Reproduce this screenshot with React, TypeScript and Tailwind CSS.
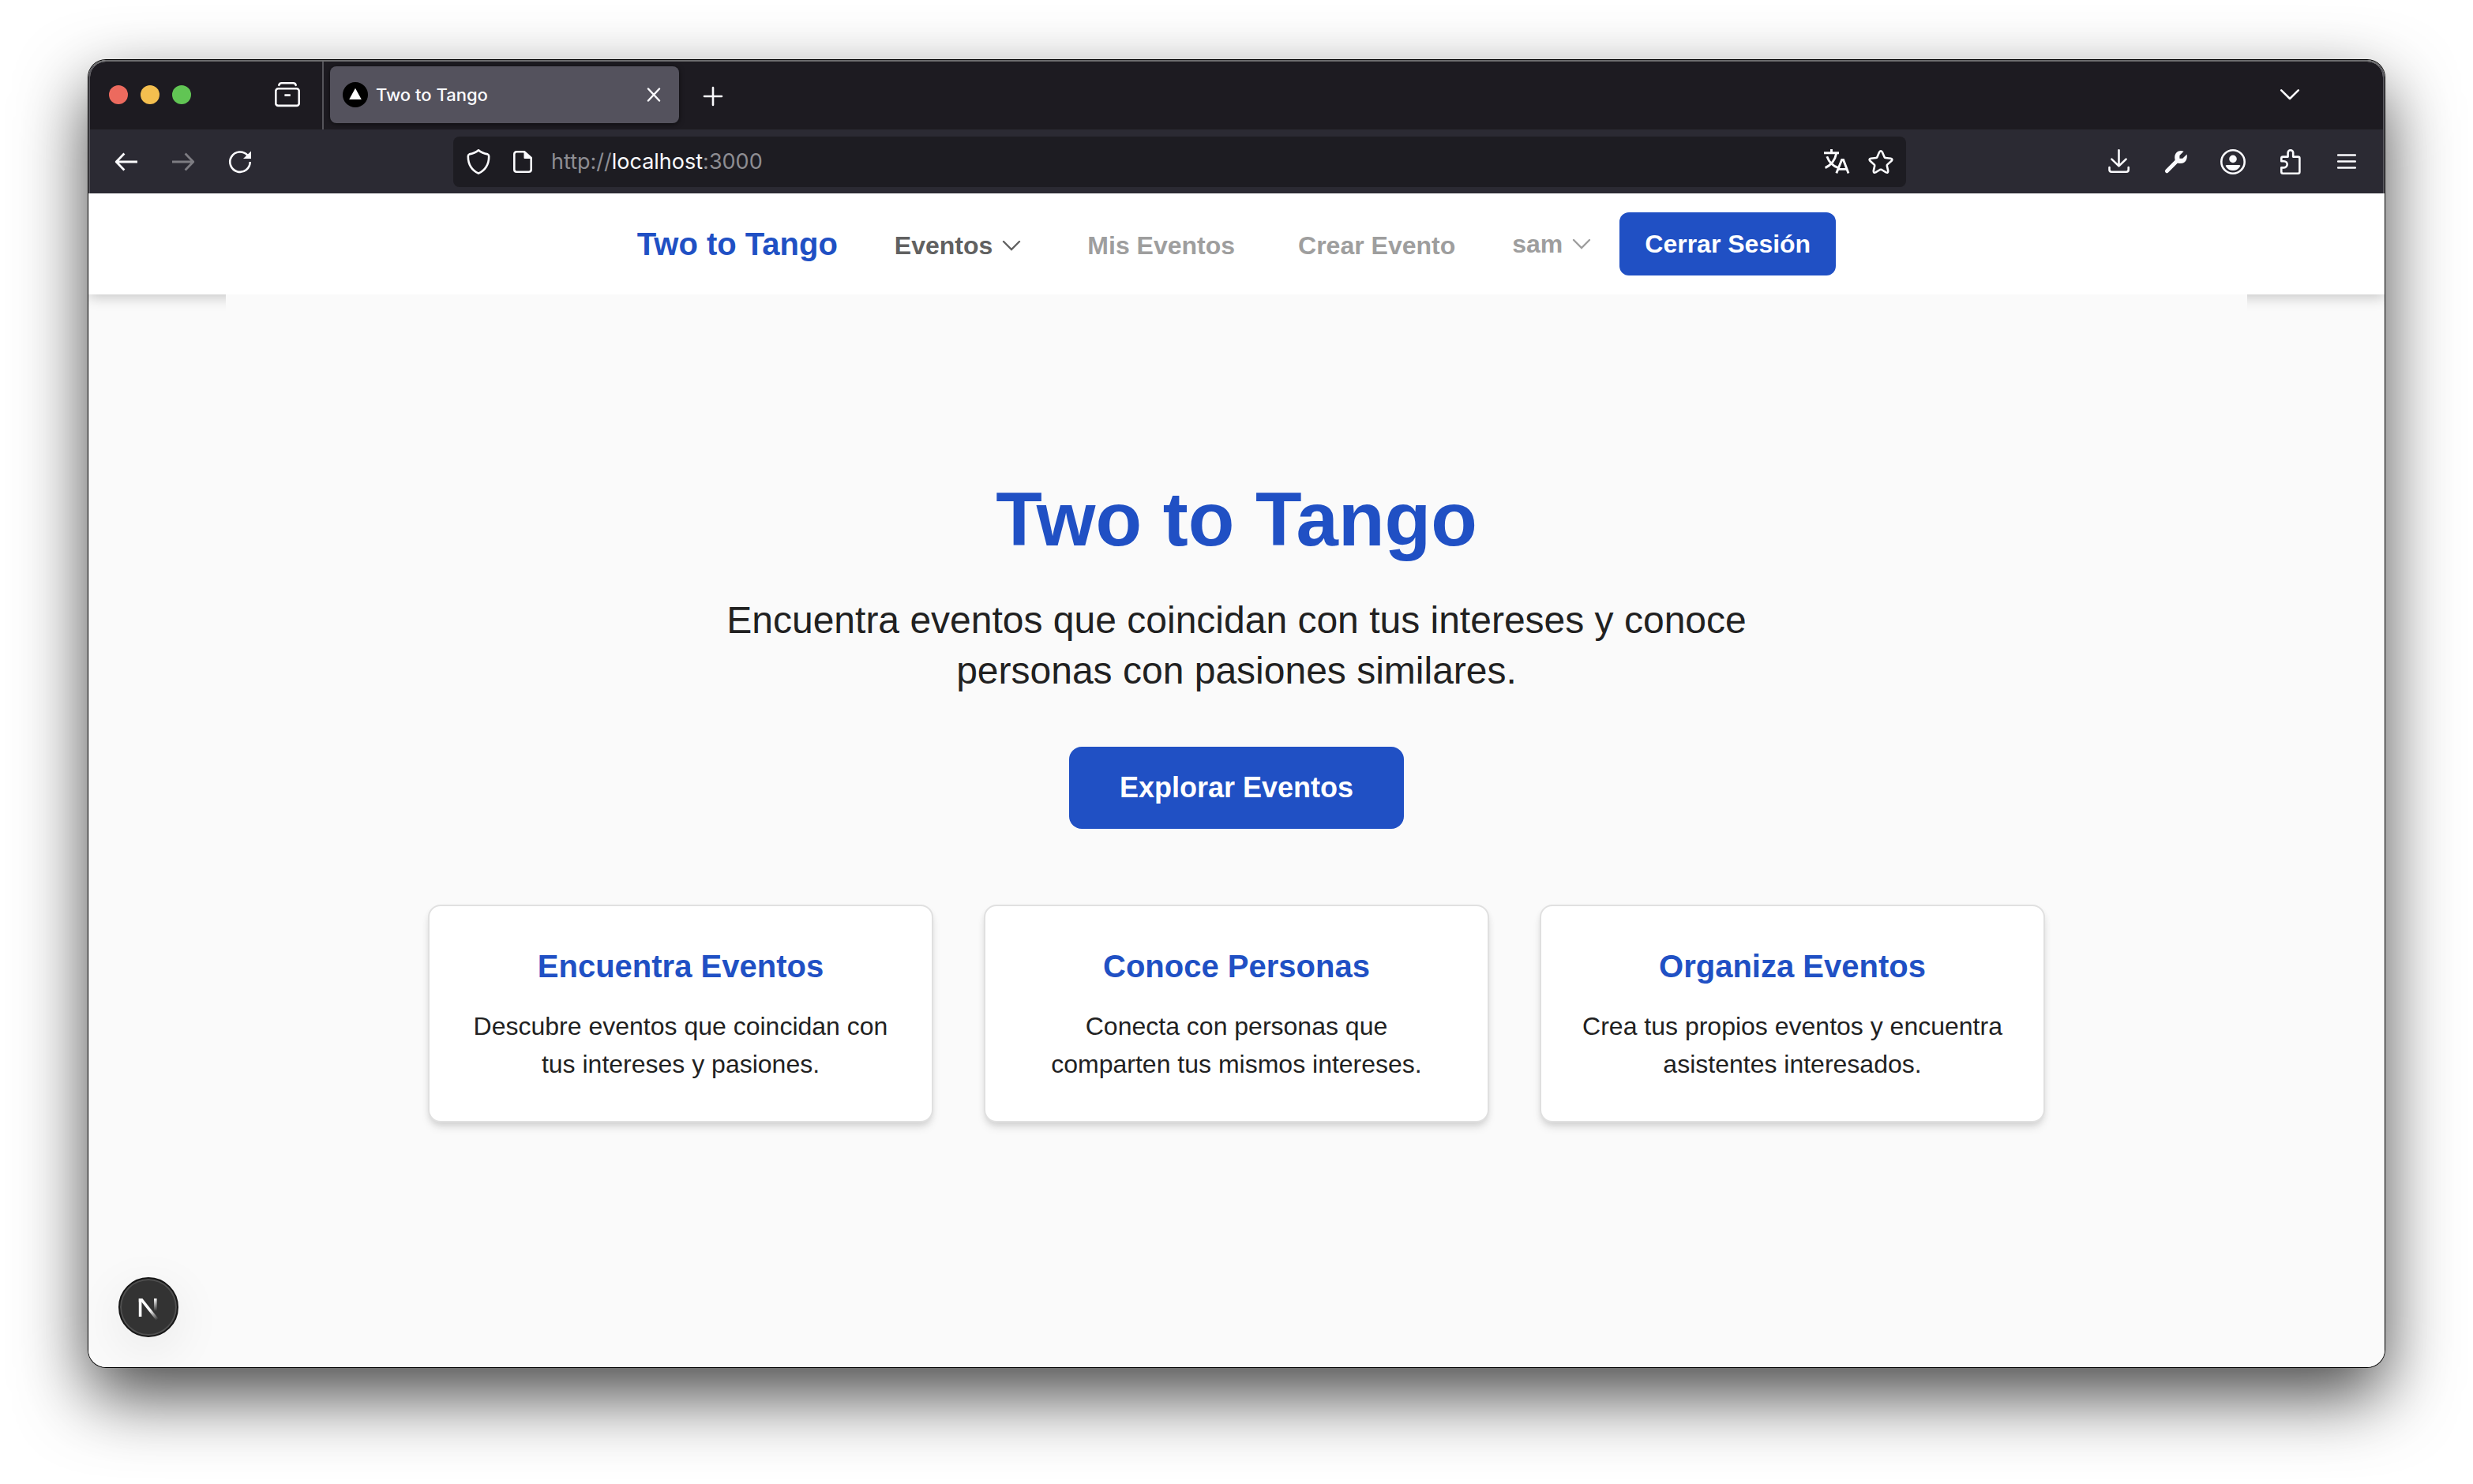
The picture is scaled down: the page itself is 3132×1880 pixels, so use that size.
import type { ReactNode } from "react";

function Icon({ children, className = "size-8" }: { children: ReactNode; className?: string }) {
  return (
    <svg
      viewBox="0 0 32 32"
      className={`shrink-0 overflow-visible ${className}`}
      fill="none"
      stroke="currentColor"
      strokeWidth="2.6"
      strokeLinecap="round"
      strokeLinejoin="round"
      aria-hidden="true"
    >
      {children}
    </svg>
  );
}

function IconButton({ label, children, className = "" }: { label: string; children: ReactNode; className?: string }) {
  return (
    <button type="button" aria-label={label} className={`flex shrink-0 ${className}`}>
      {children}
    </button>
  );
}

function TabBar() {
  return (
    <div className="flex h-[86px] items-start bg-[#1d1b21]">
      <div className="flex h-full w-[296px] items-center justify-between border-r-2 border-[#55545a] pr-7 pb-0.5 pl-6">
        <div className="flex gap-4">
          <button type="button" aria-label="Cerrar ventana" className="size-6 rounded-full bg-[#ec6a5e]" />
          <button type="button" aria-label="Minimizar" className="size-6 rounded-full bg-[#f4bf4f]" />
          <button type="button" aria-label="Maximizar" className="size-6 rounded-full bg-[#61c554]" />
        </div>
        <IconButton label="Pestañas recientes">
          <Icon>
            <path d="M5.3 3.8 Q6 1.3 8.6 1.3 H23.4 Q26 1.3 26.7 3.8" />
            <rect x="1.3" y="8.3" width="29.4" height="21.6" rx="3" />
            <path d="M12.4 16.6 H19.8" strokeLinecap="butt" />
          </Icon>
        </IconButton>
      </div>
      <div className="mt-1.5 ml-2 flex h-18 w-[442px] items-center rounded-lg bg-[#54525d] pr-6 pl-4 shadow-[0_1px_6px_rgba(0,0,0,0.6)]">
        <svg viewBox="0 0 32 32" className="size-8" aria-hidden="true">
          <circle cx="16" cy="16" r="16" fill="#000" />
          <path d="M16 7.8 L23.8 22 H8.2 Z" fill="#fff" />
        </svg>
        <span className="ml-2.5 flex-1 text-[22px] leading-8 font-medium text-[#fbfbfe]">Two to Tango</span>
        <IconButton label="Cerrar pestaña">
          <Icon className="size-4">
            <path d="M2 1 L30 31 M30 1 L2 31" strokeWidth="5" />
          </Icon>
        </IconButton>
      </div>
      <IconButton label="Nueva pestaña" className="mt-7 ml-[27px]">
        <Icon>
          <path d="M16 5 V27 M5 16 H27" />
        </Icon>
      </IconButton>
      <IconButton label="Listar pestañas" className="mt-[26px] mr-[102px] ml-auto">
        <Icon>
          <path d="M5.2 10.4 L16 21 L26.8 10.4" />
        </Icon>
      </IconButton>
    </div>
  );
}

function AddressBar() {
  return (
    <div className="flex h-16 flex-1 items-center rounded-lg bg-[#1d1c22] px-4">
      <Icon>
        <path d="M16 1.3 C13 4.2 8.5 5.6 4.4 6.4 Q2.8 7 2.8 9 C2.8 19 7 26.4 16 30.7 C25 26.4 29.2 19 29.2 9 Q29.2 7 27.6 6.4 C23.5 5.6 19 4.2 16 1.3 Z" />
      </Icon>
      <Icon className="ml-6 size-8">
        <path d="M18 3.3 H8.3 Q5.3 3.3 5.3 6.3 V25.7 Q5.3 28.7 8.3 28.7 H23.7 Q26.7 28.7 26.7 25.7 V11 Z" />
        <path d="M17.5 2.6 V11 Q17.5 12 18.5 12 H28 Z" fill="currentColor" stroke="none" />
      </Icon>
      <div className="relative ml-5 flex-1 text-[27px] leading-9">
        <input
          type="text"
          aria-label="Dirección"
          defaultValue="http://localhost:3000"
          className="w-full bg-transparent text-transparent outline-none"
        />
        <span className="pointer-events-none absolute inset-0 text-[#8d8d92]" aria-hidden="true">
          http://<span className="text-[#fbfbfe]">localhost</span>:3000
        </span>
      </div>
      <div className="flex gap-6">
        <IconButton label="Traducir">
          <Icon>
            <g strokeLinecap="butt" strokeWidth="2.9">
              <path d="M0 4.7 H19 M9.5 0 V5" />
              <path d="M15.8 5 C14 14 8.5 20.5 1.6 23.6" />
              <path d="M3.8 9.3 C6.5 16.4 11.5 21.5 17.8 23.4" />
              <path d="M15.8 30.4 L22.6 13.4 H24.6 L31 30.4" strokeLinejoin="miter" />
              <path d="M18.4 25.4 H28.4" />
            </g>
          </Icon>
        </IconButton>
        <IconButton label="Añadir a marcadores">
          <Icon>
            <path d="M14.2 3.6 Q16 0.8 17.8 3.6 L20.6 10 Q20.9 10.9 21.9 11 L28.6 11.7 Q31.6 12.4 29.6 14.8 L24.4 19.4 Q23.6 20.1 23.8 21.1 L25.2 27.4 Q25.4 30.6 22.6 29.4 L17.1 26 Q16 25.4 14.9 26 L9.4 29.4 Q6.6 30.6 6.8 27.4 L8.2 21.1 Q8.4 20.1 7.6 19.4 L2.4 14.8 Q0.4 12.4 3.4 11.7 L10.1 11 Q11.1 10.9 11.4 10 Z" />
          </Icon>
        </IconButton>
      </div>
    </div>
  );
}

function Toolbar() {
  return (
    <div className="flex h-[81px] items-center gap-[254px] bg-[#2b2a33] px-[30px]">
      <div className="flex gap-10">
        <IconButton label="Atrás">
          <Icon>
            <path d="M13.4 5.6 L3.2 16 L13.4 26.4 M4 16 H30" strokeLinecap="butt" strokeWidth="2.8" />
          </Icon>
        </IconButton>
        <IconButton label="Adelante" className="text-[#7d7c82]">
          <Icon>
            <path d="M18.6 5.6 L28.8 16 L18.6 26.4 M28 16 H2" strokeLinecap="butt" strokeWidth="2.8" />
          </Icon>
        </IconButton>
        <IconButton label="Recargar">
          <Icon>
            <path d="M28.7 16 A12.7 12.7 0 1 1 25.4 7.6" strokeLinecap="butt" />
            <path d="M30 2.4 V12 H20 Z" fill="currentColor" stroke="none" />
          </Icon>
        </IconButton>
      </div>
      <AddressBar />
      <div className="flex gap-10">
        <IconButton label="Descargas">
          <Icon>
            <path d="M15.5 1.2 V21 M6.4 12.6 L15.5 21.4 L24.6 12.6" />
            <path d="M3.5 23 V26 Q3.5 28.7 6.2 28.7 H25 Q27.7 28.7 27.7 26 V23" />
          </Icon>
        </IconButton>
        <IconButton label="Herramientas">
          <Icon>
            <path d="M4.3 27.8 L17 15" strokeWidth="4.8" />
            <path
              d="M25.6 2.8 L20.4 8 V11.8 H24.2 L29.6 6.4 C30.6 11.5 28.4 18 21.8 18 C19 18 14.2 17.4 14.2 10.4 C14.2 4 20 0.4 25.6 2.8 Z"
              fill="currentColor"
              stroke="none"
            />
          </Icon>
        </IconButton>
        <IconButton label="Cuenta">
          <Icon>
            <circle cx="16" cy="16" r="14.7" />
            <circle cx="16" cy="12.4" r="4.8" fill="currentColor" stroke="none" />
            <path d="M8.2 20 H23.8 Q26 20 25 21.8 Q22 27 16 27 Q10 27 7 21.8 Q6 20 8.2 20 Z" fill="currentColor" stroke="none" />
          </Icon>
        </IconButton>
        <IconButton label="Extensiones">
          <Icon>
            <path d="M5.3 15.2 V11.6 A2 2 0 0 1 7.3 9.6 H13.6 V4.6 A3.3 3.3 0 0 1 20.2 4.6 V9.6 H26.4 A2 2 0 0 1 28.4 11.6 V28.7 A2 2 0 0 1 26.4 30.7 H7.3 A2 2 0 0 1 5.3 28.7 V23.4 H8.6 A4.1 4.1 0 0 0 8.6 15.2 Z" />
          </Icon>
        </IconButton>
        <IconButton label="Menú">
          <Icon>
            <path d="M5.2 7.5 H26.8 M5.2 15.5 H26.8 M5.2 23.5 H26.8" />
          </Icon>
        </IconButton>
      </div>
    </div>
  );
}

function Chevron() {
  return (
    <svg viewBox="0 0 24 14" className="h-3.5 w-6" fill="none" stroke="currentColor" strokeWidth="2.4" strokeLinecap="round" aria-hidden="true">
      <path d="M2 2 L12 12 L22 2" />
    </svg>
  );
}

function SiteNav() {
  return (
    <nav className="flex h-32 items-center justify-center bg-white text-[32px] leading-12 font-bold text-[#9e9e9e] shadow-[0_4px_16px_rgba(0,0,0,0.2)]">
      <a href="#" className="text-[40px] text-[#2050c4]">
        Two to Tango
      </a>
      <div className="ml-18 flex items-center pt-1">
        <button type="button" className="flex items-center gap-3 text-[#616161]">
          Eventos
          <Chevron />
        </button>
        <a href="#" className="ml-[84px]">
          Mis Eventos
        </a>
        <a href="#" className="ml-20">
          Crear Evento
        </a>
      </div>
      <button type="button" className="ml-18 flex items-center gap-3">
        sam
        <Chevron />
      </button>
      <button type="button" className="ml-9 h-20 rounded-xl bg-[#2050c4] px-8 text-white">
        Cerrar Sesión
      </button>
    </nav>
  );
}

const features = [
  { title: "Encuentra Eventos", text: "Descubre eventos que coincidan con tus intereses y pasiones." },
  { title: "Conoce Personas", text: "Conecta con personas que comparten tus mismos intereses." },
  { title: "Organiza Eventos", text: "Crea tus propios eventos y encuentra asistentes interesados." },
];

function Landing() {
  return (
    <main className="relative mx-auto flex w-full max-w-[2560px] flex-1 flex-col items-center bg-[#fafafa] pt-[237px] text-center text-[#212121]">
      <h1 className="text-[96px] leading-24 font-bold text-[#2050c4]">Two to Tango</h1>
      <p className="mt-12 max-w-[1344px] text-[48px] leading-16">
        Encuentra eventos que coincidan con tus intereses y conoce personas con pasiones similares.
      </p>
      <a href="#" className="mt-16 flex h-26 items-center rounded-2xl bg-[#2050c4] px-16 text-[36px] leading-14 font-bold text-white">
        Explorar Eventos
      </a>
      <div className="mt-24 grid w-full max-w-[2048px] grid-cols-3 gap-16">
        {features.map((feature) => (
          <section
            key={feature.title}
            className="rounded-2xl border-2 border-[#e0e0e0] bg-white px-12 py-12 shadow-[0_8px_12px_-2px_rgba(0,0,0,0.1),0_4px_8px_-2px_rgba(0,0,0,0.1)]"
          >
            <h2 className="text-[40px] leading-14 font-bold text-[#2050c4]">{feature.title}</h2>
            <p className="mt-6 text-[32px] leading-12">{feature.text}</p>
          </section>
        ))}
      </div>
    </main>
  );
}

function DevBadge() {
  return (
    <button
      type="button"
      aria-label="Next.js"
      className="absolute bottom-[38px] left-[38px] flex size-19 items-center justify-center rounded-full border-2 border-[#171717] bg-[#333] shadow-[inset_0_0_0_2px_#4f4f4f,0_16px_64px_rgba(0,0,0,0.08)]"
    >
      <svg viewBox="0 -6 26 34" className="h-[34px] w-[26px]" fill="none" strokeWidth="3.6" aria-hidden="true">
        <defs>
          <linearGradient id="diag" gradientUnits="userSpaceOnUse" x1="15" y1="15" x2="24" y2="27">
            <stop stopColor="#fff" />
            <stop offset="1" stopColor="#fff" stopOpacity="0" />
          </linearGradient>
          <linearGradient id="stem" gradientUnits="userSpaceOnUse" x1="22" y1="0" x2="22" y2="16">
            <stop stopColor="#fff" />
            <stop offset="1" stopColor="#fff" stopOpacity="0" />
          </linearGradient>
        </defs>
        <path d="M2.6 23 V0" stroke="#fff" />
        <path d="M0.8 0 H5.4 L26 26 L23 28 L4.4 4.5 L0.8 4.5 Z" fill="url(#diag)" />
        <path d="M20 0 H23.6 V16 H20 Z" fill="url(#stem)" />
      </svg>
    </button>
  );
}

export default function App() {
  return (
    <div className="flex min-h-screen flex-col bg-white px-28 pt-[76px] pb-[148px]">
      <div className="flex flex-1 flex-col rounded-[22px] shadow-[0_0_0_1px_#000,0_36px_88px_rgba(0,0,0,0.72)]">
        <header className="overflow-hidden rounded-t-[22px] border-x-2 border-t-2 border-x-[#58575d] border-t-[#6b6b6d] font-[Inter,sans-serif] text-[#fbfbfe]">
          <TabBar />
          <Toolbar />
        </header>
        <div className="relative flex flex-1 flex-col overflow-hidden rounded-b-[22px] bg-[#fafafa] font-['Liberation_Sans',Arial,sans-serif]">
          <SiteNav />
          <Landing />
          <DevBadge />
        </div>
      </div>
    </div>
  );
}
